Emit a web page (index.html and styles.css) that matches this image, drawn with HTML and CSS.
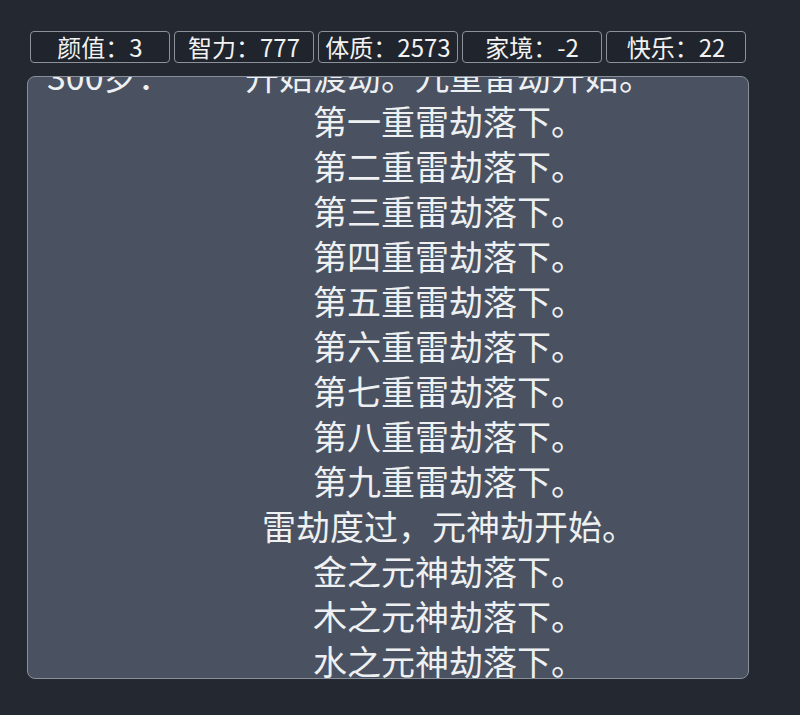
FILE: index.html
```html
<!DOCTYPE html>
<html lang="zh-CN">
<head>
<meta charset="utf-8">
<title>人生重开</title>
<link rel="stylesheet" href="styles.css">
</head>
<body>
<div class="app">
  <div class="stats">
    <div class="stat">颜值：3</div>
    <div class="stat">智力：777</div>
    <div class="stat">体质：2573</div>
    <div class="stat">家境：-2</div>
    <div class="stat">快乐：22</div>
  </div>
  <div class="log">
    <div class="log-inner">
      <div class="row">
        <div class="age">300岁：</div>
        <div class="event">开始渡劫。九重雷劫开始。<br>第一重雷劫落下。<br>第二重雷劫落下。<br>第三重雷劫落下。<br>第四重雷劫落下。<br>第五重雷劫落下。<br>第六重雷劫落下。<br>第七重雷劫落下。<br>第八重雷劫落下。<br>第九重雷劫落下。<br>雷劫度过，元神劫开始。<br>金之元神劫落下。<br>木之元神劫落下。<br>水之元神劫落下。<br>火之元神劫落下。<br>土之元神劫落下。</div>
      </div>
    </div>
  </div>
</div>
</body>
</html>
```

FILE: styles.css
```css
html, body {
  margin: 0;
  padding: 0;
  background: #232831;
  height: 100%;
}
body {
  font-family: "Noto Sans CJK SC", "Noto Sans", sans-serif;
  color: #eef0f2;
}
.app {
  width: 722px;
  margin-left: 27px;
  padding-top: 31px;
  display: flex;
  flex-direction: column;
  gap: 13px;
}
.stats {
  display: flex;
  gap: 4px;
  padding: 0 3px;
}
.stat {
  width: 140px;
  height: 32px;
  box-sizing: border-box;
  border: 1px solid #8d929a;
  border-radius: 4px;
  background: #20242c;
  font-size: 24px;
  line-height: 30px;
  text-align: center;
  color: #f2f2f2;
}
.log {
  height: 603px;
  box-sizing: border-box;
  border: 1px solid #8a909a;
  border-radius: 8px;
  background: #4a5261;
  overflow: hidden;
}
.log-inner {
  margin-top: -24px;
  padding: 0 19px;
}
.row {
  display: flex;
  font-size: 34px;
  line-height: 45px;
}
.age {
  width: 122px;
  flex: none;
  white-space: nowrap;
}
.event {
  flex: 1;
  text-align: center;
}
```
